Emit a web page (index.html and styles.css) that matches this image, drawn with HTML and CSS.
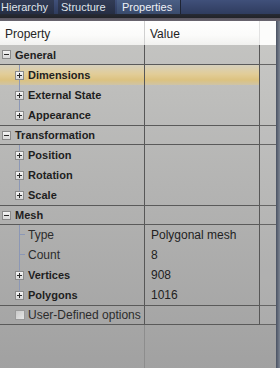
FILE: index.html
```html
<!DOCTYPE html>
<html lang="en">
<head>
  <meta charset="UTF-8" />
  <title>Properties</title>
  <link rel="stylesheet" href="styles.css">
</head>
<body>
  <!-- tabs -->
  <div class="tabs">
    <div class="tab first">Hierarchy</div>
    <div class="tab second">Structure</div>
    <div class="tab active">Properties</div>
  </div>
  <div class="tabline"></div>

  <div class="panel">
    <div class="grid">
      <div class="row head">
        <div class="prop">Property</div>
        <div class="val">Value</div>
        <div class="pad"></div>
      </div>

      <!-- General -->
      <div class="row cat top">
        <div class="prop"><span class="tog minus"></span>General</div>
        <div class="val"></div>
        <div class="pad"></div>
      </div>
      <div class="row sub hot">
        <div class="prop tree"><span class="tog"></span>Dimensions</div>
        <div class="val"></div>
        <div class="pad"></div>
      </div>
      <div class="row sub">
        <div class="prop tree"><span class="tog"></span>External State</div>
        <div class="val"></div>
        <div class="pad"></div>
      </div>
      <div class="row sub">
        <div class="prop tree last"><span class="tog"></span>Appearance</div>
        <div class="val"></div>
        <div class="pad"></div>
      </div>

      <!-- Transformation -->
      <div class="row cat">
        <div class="prop"><span class="tog minus"></span>Transformation</div>
        <div class="val"></div>
        <div class="pad"></div>
      </div>
      <div class="row sub">
        <div class="prop tree"><span class="tog"></span>Position</div>
        <div class="val"></div>
        <div class="pad"></div>
      </div>
      <div class="row sub">
        <div class="prop tree"><span class="tog"></span>Rotation</div>
        <div class="val"></div>
        <div class="pad"></div>
      </div>
      <div class="row sub">
        <div class="prop tree last"><span class="tog"></span>Scale</div>
        <div class="val"></div>
        <div class="pad"></div>
      </div>

      <!-- Mesh -->
      <div class="row cat">
        <div class="prop"><span class="tog minus"></span>Mesh</div>
        <div class="val"></div>
        <div class="pad"></div>
      </div>
      <div class="row leaf">
        <div class="prop tree dash">Type</div>
        <div class="val">Polygonal mesh</div>
        <div class="pad"></div>
      </div>
      <div class="row leaf">
        <div class="prop tree dash">Count</div>
        <div class="val">8</div>
        <div class="pad"></div>
      </div>
      <div class="row sub">
        <div class="prop tree"><span class="tog"></span>Vertices</div>
        <div class="val">908</div>
        <div class="pad"></div>
      </div>
      <div class="row sub">
        <div class="prop tree last"><span class="tog"></span>Polygons</div>
        <div class="val">1016</div>
        <div class="pad"></div>
      </div>

      <div class="row cat opt">
        <div class="prop"><span class="check"></span>User-Defined options</div>
        <div class="val"></div>
        <div class="pad"></div>
      </div>

      <div class="rest"></div>
    </div>
    <div class="edge"></div>
  </div>
</body>
</html>
```

FILE: styles.css
```css
html, body {
  height: 100%;
}
body {
  margin: 0;
  display: flex;
  flex-direction: column;
  font-family: "Liberation Sans", Arial, sans-serif;
  font-size: 12px;
  color: #262626;
  background: linear-gradient(#c8c8c5, #b4b4b3 50%, #a1a1a1);
  overflow: hidden;
}

/* tabs */
.tabs {
  display: flex;
  height: 14px;
  background: linear-gradient(#40507a, #2f3c5e);
}
.tab {
  box-sizing: border-box;
  height: 14px;
  line-height: 14px;
  font-size: 11px;
  color: #dfe3ea;
  background: linear-gradient(#323c56, #262e44);
  white-space: nowrap;
}
.tab.first {
  width: 54px;
  padding-left: 1px;
  margin-right: 4px;
}
.tab.second {
  width: 57px;
  padding-left: 3px;
  margin-right: 2px;
}
.tab.active {
  width: 64px;
  padding-left: 5px;
  color: #eef1f6;
  background: linear-gradient(#4b5f85, #394a6c);
  border-right: 1px solid #1e2434;
}
.tabline {
  height: 7px;
  background: linear-gradient(#262a34, #222328 55%, #5d5862 60%, #6a6670);
}

/* grid */
.panel {
  flex: 1;
  display: flex;
}
.grid {
  flex: 1;
  display: flex;
  flex-direction: column;
}
.row {
  display: flex;
  box-sizing: border-box;
  height: 20px;
}
.prop, .val {
  display: flex;
  align-items: center;
  box-sizing: border-box;
  white-space: nowrap;
  border-right: 1px solid #575757;
}
.prop {
  width: 145px;
}
.val {
  width: 115px;
  padding-left: 6px;
  color: #222;
}
.pad {
  flex: 1;
  background: rgba(255, 255, 255, 0.07);
}

.row.head {
  height: 24px;
  background: linear-gradient(#ffffff, #fbfbfa 60%, #f1f1ef);
}
.row.head .prop {
  padding-left: 5px;
  padding-top: 1px;
  border-right-color: #d0d0d0;
}
.row.head .val {
  padding-left: 5px;
  padding-top: 1px;
  border-right-color: #e2e2e2;
}
.row.head .pad {
  background: #fcfcfb;
}

.row.cat {
  border-top: 1px solid #5a5a5a;
  border-bottom: 1px solid #5a5a5a;
}
.row.cat.top {
  border-top: none;
}
.row.cat .pad,
.row.cat.top .pad {
  margin: -1px 0;
}
.row.cat .prop {
  padding-left: 2px;
  font-size: 11px;
  font-weight: bold;
  color: #1e1e1e;
}
.row.sub .prop {
  padding-left: 15px;
  font-size: 11px;
  font-weight: bold;
  color: #1e1e1e;
}
.row.leaf .prop {
  padding-left: 28px;
  color: #2c2c2c;
}

/* tree lines */
.prop.tree {
  background: linear-gradient(#8b97b5, #8b97b5) no-repeat 19px 0 / 1px 100%;
}
.prop.tree.last {
  background-size: 1px 50%;
}
.prop.tree.dash {
  background:
    linear-gradient(#8b97b5, #8b97b5) no-repeat 19px 0 / 1px 100%,
    linear-gradient(#8b97b5, #8b97b5) no-repeat 20px 9px / 5px 1px;
}

/* expander boxes */
.tog {
  box-sizing: border-box;
  width: 9px;
  height: 9px;
  margin-right: 4px;
  flex: none;
  border: 1px solid #8a8a8a;
  background:
    linear-gradient(#2a2a2a, #2a2a2a) no-repeat center / 5px 1px,
    linear-gradient(#2a2a2a, #2a2a2a) no-repeat center / 1px 5px,
    linear-gradient(#f4f4f4, #d8d8d8);
}
.tog.minus {
  background:
    linear-gradient(#2a2a2a, #2a2a2a) no-repeat center / 5px 1px,
    linear-gradient(#f4f4f4, #d8d8d8);
}

/* highlighted row */
.row.hot .prop,
.row.hot .val {
  background-color: transparent;
  background-image:
    linear-gradient(#8b97b5, #8b97b5),
    linear-gradient(#d6d0bd, #e2cd98 45%, #dcc280 75%, #cfc4a6);
}
.row.hot .prop {
  background-repeat: no-repeat;
  background-position: 19px 0, 0 0;
  background-size: 1px 100%, 100% 100%;
}
.row.hot .val {
  background-image: linear-gradient(#d6d0bd, #e2cd98 45%, #dcc280 75%, #cfc4a6);
}

/* user-defined row */
.row.opt .prop {
  padding-left: 15px;
  font-size: 12px;
  font-weight: normal;
  color: #2c2c2c;
}
.check {
  box-sizing: border-box;
  width: 10px;
  height: 10px;
  margin-right: 3px;
  flex: none;
  border: 1px solid #9a9a9a;
  background: linear-gradient(135deg, #c8c8c8, #e6e6e6);
}

.rest {
  flex: 1;
  margin-left: 144px;
  border-left: 1px solid #8d8d8d;
}

.edge {
  width: 4px;
  background: linear-gradient(to right, #4a5262, #7c8492);
}
```
